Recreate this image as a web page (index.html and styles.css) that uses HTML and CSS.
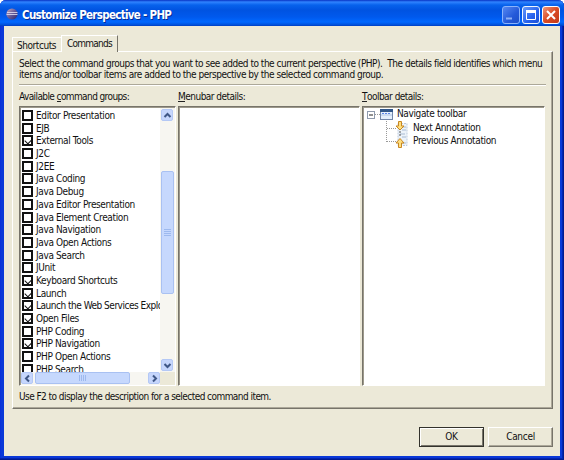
FILE: index.html
```
<!DOCTYPE html>
<html lang="en">
<head>
<meta charset="utf-8">
<title>Customize Perspective - PHP</title>
<link rel="stylesheet" href="styles.css">
</head>
<body>
<div class="window">
  <header class="titlebar">
    <svg class="logo" width="12" height="12" viewBox="0 0 12 12"><defs><linearGradient id="orb" x2="1" y2="1"><stop stop-color="#c9aab8"/><stop offset=".5" stop-color="#665b9a"/><stop offset="1" stop-color="#27266b"/></linearGradient></defs><circle cx="6" cy="6" r="5.6" fill="url(#orb)"/><path d="M1 4.500h10.500M.5 6.500h11" stroke="#e6e4f5" stroke-width=".8"/></svg>
    <h1>Customize Perspective - PHP</h1>
    <div class="controls">
      <span class="ctl"><svg width="16" height="16"><path d="M3 11.500h6" stroke="#8eb0f5" stroke-width="2"/></svg></span>
      <span class="ctl max"><svg width="16" height="16"><path d="M3.500 4v8.500h9V4" fill="none" stroke="#fff"/><path d="M3 4.500h10" stroke="#fff" stroke-width="3"/></svg></span>
      <span class="ctl close"><svg width="16" height="16"><path d="M4 4l8 8M12 4l-8 8" stroke="#fff" stroke-width="2"/></svg></span>
    </div>
  </header>
  <main>
    <nav class="tabs"><span class="tab first">Shortcuts</span><span class="tab active">Commands</span></nav>
    <section class="page">
      <p class="intro"><span class="l1">Select the command groups that you want to see added to the current perspective (PHP).&nbsp; The details field identifies which menu</span><br><span class="l2">items and/or toolbar items are added to the perspective by the selected command group.</span></p>
      <div class="rule"></div>
      <div class="columns">
        <div class="column">
          <h2 class="avail">Available <u>c</u>ommand groups:</h2>
          <div class="box groups">
            <ul>
              <li><i></i>Editor Presentation</li>
              <li><i></i>EJB</li>
              <li><i class="on"></i>External Tools</li>
              <li><i></i>J2C</li>
              <li><i></i>J2EE</li>
              <li><i></i>Java Coding</li>
              <li><i></i>Java Debug</li>
              <li><i></i>Java Editor Presentation</li>
              <li><i></i>Java Element Creation</li>
              <li><i></i>Java Navigation</li>
              <li><i></i>Java Open Actions</li>
              <li><i></i>Java Search</li>
              <li><i></i>JUnit</li>
              <li><i class="on"></i>Keyboard Shortcuts</li>
              <li><i class="on"></i>Launch</li>
              <li class="long"><i class="on"></i>Launch the Web Services Explo</li>
              <li><i class="on"></i>Open Files</li>
              <li><i></i>PHP Coding</li>
              <li><i class="on"></i>PHP Navigation</li>
              <li><i></i>PHP Open Actions</li>
              <li><i></i>PHP Search</li>
            </ul>
            <div class="vbar">
              <span class="arrow"><svg width="11" height="11"><path d="M2.500 7l3-3 3 3" /></svg></span>
              <span class="thumb"><svg width="7" height="8"><path d="M0 .5h7M0 2.500h7M0 4.500h7M0 6.500h7"/></svg></span>
              <span class="arrow"><svg width="11" height="11"><path d="M2.500 4l3 3 3-3" /></svg></span>
            </div>
            <div class="hbar">
              <span class="arrow"><svg width="11" height="11"><path d="M7 2.500l-3 3 3 3" /></svg></span>
              <span class="thumb"><svg width="8" height="6"><path d="M.5 0v6M2.500 0v6M4.500 0v6M6.500 0v6"/></svg></span>
              <span class="arrow"><svg width="11" height="11"><path d="M4 2.500l3 3-3 3" /></svg></span>
            </div>
          </div>
        </div>
        <div class="column">
          <h2 class="menu"><u>M</u>enubar details:</h2>
          <div class="box"></div>
        </div>
        <div class="column">
          <h2 class="tool"><u>T</u>oolbar details:</h2>
          <div class="box tree">
            <svg width="46" height="46" viewBox="0 0 46 46">
              <path d="M11 6.500h5M22.500 13v21M23 20.500h10M23 33.500h10" fill="none" stroke="#999" stroke-dasharray="1 1"/>
              <rect x="3.500" y="3.500" width="7" height="7" fill="#fff" stroke="#8f9bad"/><path d="M5 7h4" stroke="#222"/>
              <rect x="16.500" y="1.500" width="12" height="10" fill="#e4effc" stroke="#7488aa"/><path d="M16 2.500h13" stroke="#315789" stroke-width="3"/><path d="M18 5.500h9" stroke="#5985e8" stroke-dasharray="2 1"/><path d="M17 7h11" stroke="#b0c6e6"/>
              <path d="M34 15.500h9v22h-9z" fill="#edf3fa" stroke="#bdcadd" stroke-dasharray="2 1"/><path d="M38 19h4M38 22h4M36 26h5M38 29h4M38 35h4" stroke="#a8bad2"/><path d="M35 24h3M35 27h3" stroke="#555" stroke-dasharray="2 1"/>
              <path d="M34.500 13.500h3V18h2.500l-4 4-4-4h2.500zM34.500 39.500h3V35h2.500l-4-4.500-4 4.500h2.500z" fill="#ffdf80" stroke="#c88722"/>
            </svg>
            <div class="nodes"><span class="n1">Navigate toolbar</span><span class="n2">Next Annotation</span><span class="n3">Previous Annotation</span></div>
          </div>
        </div>
      </div>
      <p class="hint">Use F2 to display the description for a selected command item.</p>
    </section>
    <footer><button class="ok">OK</button><button class="cancel">Cancel</button></footer>
  </main>
</div>
</body>
</html>
```
FILE: styles.css
```
* { box-sizing: border-box; }
body { margin: 0; background: #fff; font: 10px/12px "DejaVu Sans Condensed", "DejaVu Sans", sans-serif; font-stretch: condensed; color: #111; }
h1, h2, p, ul { margin: 0; padding: 0; font-weight: normal; }
svg { display: block; flex: none; }
span { white-space: nowrap; }
.window { width: 564px; height: 460px; display: flex; flex-direction: column; padding: 0 4px 4px; border-radius: 6px 6px 0 0; background: #0938d8; box-shadow: inset -1px -1px #001b91, inset -2px -2px #0424b0, inset 1px 0 #0831d9; }
.titlebar { height: 26px; margin: 0 -4px; padding: 1px 4px 0 6px; display: flex; align-items: center; border-radius: 6px 6px 0 0; background: linear-gradient(#0833c4, #2f83ff 2px, #0762ec 5px, #0053e1 10px, #0059ed 17px, #0068ff 22px, #004fd8 25px, #003bc0); }
.titlebar h1 { margin-left: 4px; flex: 1; color: #fff; font: bold 11.5px/15px "DejaVu Sans Condensed", "DejaVu Sans", sans-serif; letter-spacing: -.7px; text-shadow: 1px 1px #062d95; padding-top: 3px; white-space: nowrap; }
.controls { display: flex; gap: 2px; padding-top: 2px; }
.ctl { width: 18px; height: 18px; border: 1px solid #8bb3fb; border-radius: 3px; background: linear-gradient(135deg, #5587f1, #2459d9 60%, #1c4fc8); }
.max { border-color: #eef5ff; background: linear-gradient(135deg, #6899fb, #2561ed 60%, #1a50d8); }
.close { border-color: #fff; background: linear-gradient(135deg, #ee977c, #d94b25 50%, #c3391a); }
main { flex: 1; background: #ece9d8; padding: 9px 7px 0 8px; display: flex; flex-direction: column; min-height: 0; }
.tabs { display: flex; align-items: flex-end; height: 16px; flex: none; }
.tab { height: 14px; padding: 2px 0 0 5px; border-left: 1px solid #fff; border-top: 1px solid #fff; letter-spacing: -.45px; }
.first { width: 49px; padding-left: 4px; }
.active { width: 57px; height: 17px; padding-top: 2px; margin-bottom: -1px; border-right: 1px solid #77746a; background: #ece9d8; position: relative; letter-spacing: -.75px; }
.page { height: 358px; flex: none; border: 1px solid #fff; border-right: 1px solid #77746a; border-bottom: 1px solid #77746a; box-shadow: inset -1px -1px #aca899; padding: 6px 6px 0 6px; }
.intro { line-height: 11px; height: 26px; letter-spacing: -.477px; }
.rule { height: 2px; border-top: 1px solid #aca899; border-bottom: 1px solid #fff; }
.columns { display: grid; grid-template-columns: 157px 182px 183px; gap: 2px; padding-top: 5px; }
.column { min-width: 0; }
.column h2 { font-size: 10px; line-height: 12px; height: 15px; white-space: nowrap; letter-spacing: -.52px; }
.column .avail { letter-spacing: -.6px; }
u { text-decoration: none; display: inline-block; height: 11px; line-height: 12px; border-bottom: 1px solid #222; vertical-align: top; }
.box { height: 280px; background: #fff; border: 1px solid #fff; border-top: 1px solid #77746a; border-left: 1px solid #77746a; box-shadow: inset 1px 1px #9d998b; padding: 1px 0 0 1px; }
.groups { display: grid; grid-template: 264px 13px / 139px 15px; background: #ece9d8; }
.groups ul { overflow: hidden; background: #fff; list-style: none; padding-top: 1px; }
.groups li { height: 12.7px; line-height: 13px; display: flex; gap: 3px; padding-left: 1px; white-space: nowrap; letter-spacing: -.37px; }
.groups .long { letter-spacing: -.49px; }
.groups i { width: 11px; height: 11px; margin-top: 1px; border: 2px solid #111; background: #fff; flex: none; display: flex; }
.groups i.on::after { content: ""; width: 6px; height: 3.5px; margin: 1px 0 0 .5px; border: solid #111; border-width: 0 0 1.5px 1.5px; transform: rotate(-45deg); }
.vbar, .hbar { display: flex; background: #f7f6f1; }
.vbar { flex-direction: column; padding: 1px; }
.arrow { width: 12px; height: 12px; flex: none; border: 1px solid #b4c8f5; border-radius: 2px; background: #c6d6fc; display: grid; place-items: center; }
.arrow path { fill: none; stroke: #3f5786; stroke-width: 2; }
.thumb { border: 1px solid #a9c1f2; border-radius: 2px; background: #c6d8fd; display: grid; place-items: center; }
.thumb path { stroke: #9db9ee; stroke-width: 1; }
.vbar .thumb { height: 123px; margin: 50px 0 auto; width: 13px; }
.hbar .thumb { width: 95px; margin: 0 auto 0 2px; height: 12px; }
.tree { display: flex; }
.nodes { display: flex; flex-direction: column; line-height: 13.5px; margin-top: -1px; letter-spacing: -.37px; }
.n1 { margin-left: -13px; }
.n2, .n3 { margin-left: 3px; }
.hint { padding-top: 5px; white-space: nowrap; letter-spacing: -.55px; }
footer { display: flex; justify-content: flex-end; gap: 4px; padding-top: 18px; }
button { width: 65px; height: 20px; padding: 0; font: inherit; letter-spacing: -.3px; color: #111; background: #ece9d8; border: 1px solid #fff; border-right: 1px solid #77746a; border-bottom: 1px solid #77746a; box-shadow: inset -1px -1px #aca899; }
.ok { border: 1px solid #33322c; box-shadow: inset 1px 1px #fff, inset -1px -1px #77746a; }
```
